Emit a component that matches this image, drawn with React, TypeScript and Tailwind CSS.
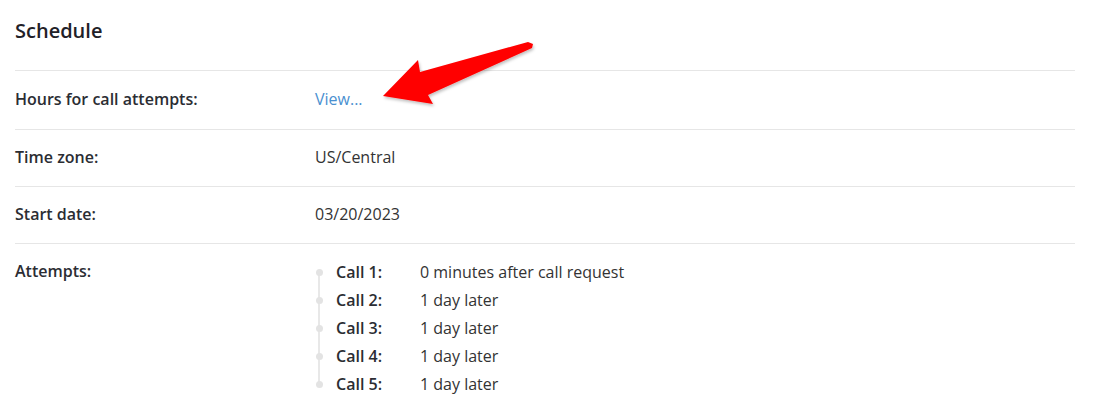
import React from "react";

const attempts = [
  { label: "Call 1:", value: "0 minutes after call request" },
  { label: "Call 2:", value: "1 day later" },
  { label: "Call 3:", value: "1 day later" },
  { label: "Call 4:", value: "1 day later" },
  { label: "Call 5:", value: "1 day later" },
];

function Arrow() {
  return (
    <svg
      className="absolute left-[370px] top-[35px] pointer-events-none"
      width="180"
      height="80"
      viewBox="370 35 180 80"
    >
      <defs>
        <filter id="sh" x="-10%" y="-10%" width="130%" height="140%">
          <feDropShadow dx="1" dy="2" stdDeviation="1.5" floodColor="#000" floodOpacity="0.25" />
        </filter>
      </defs>
      <polygon
        points="528,42 420,72 418,60 383,96 433,104 428,95 532,48 533,44"
        fill="#ff0000"
        filter="url(#sh)"
      />
    </svg>
  );
}

function App() {
  return (
    <div
      className="relative w-[1095px] h-[412px] bg-white overflow-hidden text-[16px] text-[#2b2d33]"
      style={{ fontFamily: '"Open Sans", "Noto Sans", sans-serif' }}
    >
      <div className="pl-[15px] pr-[20px]">
        <h2 className="pt-[19px] pb-[27px] text-[20px] leading-[24px] font-semibold text-[#1f2128]">
          Schedule
        </h2>

        <div className="flex border-t border-[#e6e6e6] pt-[18px] pb-[20px] leading-[20px]">
          <div className="w-[300px] font-semibold">Hours for call attempts:</div>
          <a className="text-[#4a90d0] cursor-pointer">View...</a>
        </div>

        <div className="flex border-t border-[#e6e6e6] pt-[17px] pb-[19px] leading-[20px]">
          <div className="w-[300px] font-semibold">Time zone:</div>
          <div className="text-[#333]">US/Central</div>
        </div>

        <div className="flex border-t border-[#e6e6e6] pt-[17px] pb-[19px] leading-[20px]">
          <div className="w-[300px] font-semibold">Start date:</div>
          <div className="text-[#333]">03/20/2023</div>
        </div>

        <div className="flex items-start border-t border-[#e6e6e6]">
          <div className="w-[300px] pt-[17px] leading-[20px] font-semibold">Attempts:</div>
          <div className="relative pt-[14px]">
            <div className="absolute left-[3px] top-[28px] h-[112px] w-[2px] bg-[#e8e8e8]" />
            {attempts.map((a) => (
              <div key={a.label} className="relative flex items-center h-[28px]">
                <div className="w-[21px] flex">
                  <span className="ml-[1px] w-[7px] h-[7px] rounded-full bg-[#e3e3e3]" />
                </div>
                <div className="w-[84px] font-semibold">{a.label}</div>
                <div className="text-[#333]">{a.value}</div>
              </div>
            ))}
          </div>
        </div>
      </div>
      <Arrow />
    </div>
  );
}

export default App;
